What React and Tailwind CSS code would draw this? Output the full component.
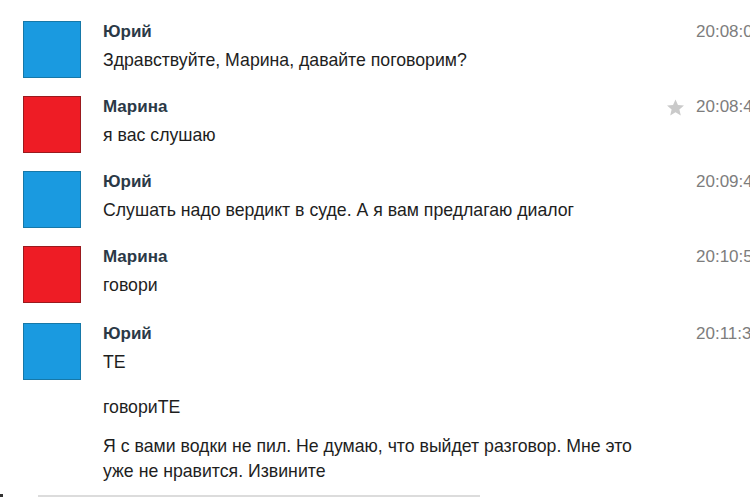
import React from "react";

const messages = [
  { id: 1, author: "Юрий", color: "blue", time: "20:08:06", lines: ["Здравствуйте, Марина, давайте поговорим?"] },
  { id: 2, author: "Марина", color: "red", time: "20:08:42", starred: true, lines: ["я вас слушаю"] },
  { id: 3, author: "Юрий", color: "blue", time: "20:09:44", lines: ["Слушать надо вердикт в суде. А я вам предлагаю диалог"] },
  { id: 4, author: "Марина", color: "red", time: "20:10:52", lines: ["говори"] },
  { id: 5, author: "Юрий", color: "blue", time: "20:11:38", lines: ["ТЕ"], last: true },
];

const Star = () => (
  <svg width="19" height="19" viewBox="0 0 24 24" className="text-[#cacaca]">
    <path fill="currentColor" d="M12 1.8l3.1 7.1 7.6.6-5.8 5 1.8 7.5L12 18l-6.7 4 1.8-7.5-5.8-5 7.6-.6z" />
  </svg>
);

const Avatar = ({ color }) => (
  <div
    className={`w-[58px] h-[57px] shrink-0 border ${
      color === "blue" ? "bg-[#1a9ae0] border-[#1678a8]" : "bg-[#ee1c25] border-[#9a1a1e]"
    }`}
  />
);

const Message = ({ msg }) => (
  <div className={`flex h-[75px] ${msg.last ? "pt-[2px]" : ""}`}>
    <div className="pl-[23px] pr-[22px] pt-[21px]">
      <Avatar color={msg.color} />
    </div>
    <div className="flex-1 pt-[21px]">
      <div className="text-[17px] leading-[22px] font-bold text-[#2b3947]">{msg.author}</div>
      {msg.lines.map((l) => (
        <div key={l} className="mt-[6px] text-[17.7px] leading-[22px] text-[#1e1e1e]">{l}</div>
      ))}
    </div>
    <div className="w-[40px] shrink-0 pt-[23px] flex items-start justify-end pr-[11px]">
      {msg.starred && <Star />}
    </div>
    <div className="w-[54px] shrink-0 pt-[21px] overflow-hidden whitespace-nowrap text-[17px] leading-[22px] text-[#7d7d7d]">
      {msg.time}
    </div>
  </div>
);

export default function App() {
  return (
    <div className="w-[750px] h-[500px] bg-white overflow-hidden relative" style={{ fontFamily: '"Liberation Sans", Arial, sans-serif' }}>
      <div className="flex flex-col">
        {messages.map((m) => (
          <Message key={m.id} msg={m} />
        ))}
      </div>
      <div className="pl-[103px] text-[17.7px] leading-[22px] text-[#1e1e1e]">
        <div className="mt-[21px]">говориТЕ</div>
        <div className="mt-[16px] leading-[25px]">
          Я с вами водки не пил. Не думаю, что выйдет разговор. Мне это
          <br />
          уже не нравится. Извините
        </div>
      </div>
      <div className="absolute left-[38px] right-[270px] bottom-[3px] h-[2px] bg-[#dcdcdc]" />
      <div className="absolute left-0 bottom-[3px] w-[3px] h-[3px] bg-[#333]" />
    </div>
  );
}
